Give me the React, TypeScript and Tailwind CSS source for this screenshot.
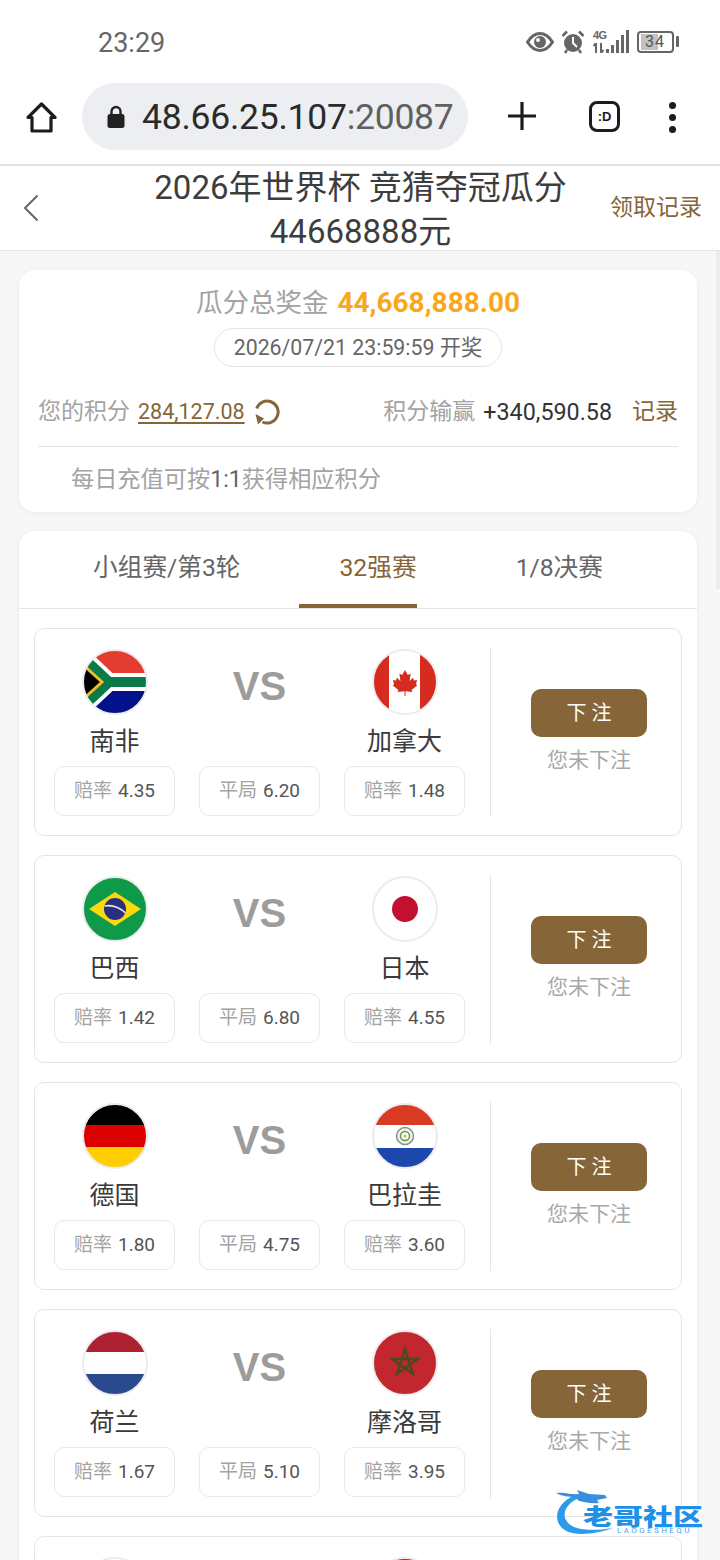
import React from 'react';

type FlagName = 'za' | 'ca' | 'br' | 'jp' | 'de' | 'py' | 'nl' | 'ma' | 'blank' | 'red';

interface Match {
  home: string;
  away: string;
  homeFlag: FlagName;
  awayFlag: FlagName;
  homeOdds: string;
  draw: string;
  awayOdds: string;
}

const matches: Match[] = [
  { home: '南非', away: '加拿大', homeFlag: 'za', awayFlag: 'ca', homeOdds: '4.35', draw: '6.20', awayOdds: '1.48' },
  { home: '巴西', away: '日本', homeFlag: 'br', awayFlag: 'jp', homeOdds: '1.42', draw: '6.80', awayOdds: '4.55' },
  { home: '德国', away: '巴拉圭', homeFlag: 'de', awayFlag: 'py', homeOdds: '1.80', draw: '4.75', awayOdds: '3.60' },
  { home: '荷兰', away: '摩洛哥', homeFlag: 'nl', awayFlag: 'ma', homeOdds: '1.67', draw: '5.10', awayOdds: '3.95' },
];

const FlagArt = ({ name }: { name: FlagName }) => {
  switch (name) {
    case 'za':
      return (
        <>
          <rect width="66" height="33" fill="#e23d30" />
          <rect y="33" width="66" height="33" fill="#03128a" />
          <path d="M-4 4 L27 33 L70 33 M27 33 L-4 62" fill="none" stroke="#fff" strokeWidth="18" />
          <path d="M-4 4 L27 33 L70 33 M27 33 L-4 62" fill="none" stroke="#0a7a48" strokeWidth="10" />
          <path d="M-2 13 L20 33 L-2 53 Z" fill="#000" stroke="#f2b92c" strokeWidth="3" />
        </>
      );
    case 'ca':
      return (
        <>
          <rect width="66" height="66" fill="#fff" />
          <rect width="17" height="66" fill="#d62c1f" />
          <rect x="48" width="18" height="66" fill="#d62c1f" />
          <path
            d="M33 21 L35.8 26 L38.6 24.6 L37.6 32 L41 28.8 L42 31.4 L45 31 L44 35.4 L45.4 36.2 L39.6 41 L40.2 43 L33.5 42.2 V47 H32.5 V42.2 L25.8 43 L26.4 41 L20.6 36.2 L22 35.4 L21 31 L24 31.4 L25 28.8 L28.4 32 L27.4 24.6 L30.2 26 Z"
            fill="#d62c1f"
          />
        </>
      );
    case 'br':
      return (
        <>
          <rect width="66" height="66" fill="#0e9a49" />
          <path d="M33 16 L59 33 L33 50 L7 33 Z" fill="#fbd90a" />
          <circle cx="33" cy="33" r="11" fill="#28307f" />
          <path d="M22.5 30 Q34 28 43.5 37" fill="none" stroke="#e8e8e8" strokeWidth="1.6" />
        </>
      );
    case 'jp':
      return (
        <>
          <rect width="66" height="66" fill="#fff" />
          <circle cx="33" cy="33" r="13" fill="#c3102f" />
        </>
      );
    case 'de':
      return (
        <>
          <rect width="66" height="23" fill="#000" />
          <rect y="22" width="66" height="22" fill="#dd0000" />
          <rect y="44" width="66" height="22" fill="#ffce00" />
        </>
      );
    case 'py':
      return (
        <>
          <rect width="66" height="22" fill="#d93a22" />
          <rect y="22" width="66" height="23" fill="#fff" />
          <rect y="45" width="66" height="21" fill="#1c48ad" />
          <circle cx="33" cy="33" r="8.5" fill="#eef1e8" stroke="#8a8f88" strokeWidth="1.5" />
          <circle cx="33" cy="33" r="4.5" fill="#fff" stroke="#5c9a5c" strokeWidth="1.5" />
          <circle cx="33" cy="33" r="1.5" fill="#d8b428" />
        </>
      );
    case 'nl':
      return (
        <>
          <rect width="66" height="23" fill="#ad2131" />
          <rect y="22" width="66" height="22" fill="#fff" />
          <rect y="44" width="66" height="22" fill="#2a4a8f" />
        </>
      );
    case 'ma':
      return (
        <>
          <rect width="66" height="66" fill="#c1272d" />
          <path d="M33 19 L41 44 L20 29 L46 29 L25 44 Z" fill="none" stroke="#4a4a22" strokeWidth="2.4" />
        </>
      );
    case 'red':
      return <rect width="66" height="66" fill="#c3102f" />;
    default:
      return <rect width="66" height="66" fill="#fff" />;
  }
};

const Flag = ({ name }: { name: FlagName }) => {
  const id = `clip-${name}`;
  return (
    <svg width="66" height="66" viewBox="0 0 66 66" className="block">
      <defs>
        <clipPath id={id}>
          <circle cx="33" cy="33" r="32" />
        </clipPath>
      </defs>
      <g clipPath={`url(#${id})`}>
        <FlagArt name={name} />
      </g>
      <circle cx="33" cy="33" r="32" fill="none" stroke="#ececec" strokeWidth="2" />
    </svg>
  );
};

const OddsBox = ({ label, value }: { label: string; value: string }) => (
  <div className="h-[50px] border border-[#e8e8e8] rounded-[10px] flex items-center justify-center gap-[6px] text-[19px]">
    <span className="text-[#a3a3a3]">{label}</span>
    <span className="text-[#555]">{value}</span>
  </div>
);

const MatchCard = ({ match }: { match: Match }) => (
  <div className="border border-[#e5e5e5] rounded-[10px] h-[208px] flex shrink-0 pt-[19px]">
    <div className="w-[456px] pl-[19px] pr-[25px] h-[169px] border-r border-[#e5e5e5]">
      <div className="grid grid-cols-[121px_121px_121px] gap-x-[24px] h-[118px] pt-[1px]">
        <div className="flex flex-col items-center">
          <Flag name={match.homeFlag} />
          <span className="text-[25px] leading-[34px] mt-[10px] text-[#3a3a3a]">{match.home}</span>
        </div>
        <div className="flex justify-center pt-[8px]">
          <span className="text-[40px] leading-[58px] font-bold text-[#9c9c9c] font-['Liberation_Sans',sans-serif]">VS</span>
        </div>
        <div className="flex flex-col items-center">
          <Flag name={match.awayFlag} />
          <span className="text-[25px] leading-[34px] mt-[10px] text-[#3a3a3a]">{match.away}</span>
        </div>
      </div>
      <div className="grid grid-cols-[121px_121px_121px] gap-x-[24px]">
        <OddsBox label="赔率" value={match.homeOdds} />
        <OddsBox label="平局" value={match.draw} />
        <OddsBox label="赔率" value={match.awayOdds} />
      </div>
    </div>
    <div className="pl-[40px] pt-[41px] w-[156px] flex flex-col items-center">
      <button className="w-[116px] h-[48px] rounded-[10px] bg-[#866538] text-white text-[20px] shrink-0">下 注</button>
      <span className="mt-[8px] text-[21px] leading-[30px] text-[#a8a8a8] whitespace-nowrap">您未下注</span>
    </div>
  </div>
);

// only the top of the next card is on screen
const PeekCard = () => (
  <div className="border border-[#e5e5e5] rounded-[10px] h-[208px] shrink-0 pt-[20px] pl-[19px]">
    <div className="grid grid-cols-[121px_121px_121px] gap-x-[24px]">
      <div className="flex justify-center">
        <Flag name="blank" />
      </div>
      <div></div>
      <div className="flex justify-center">
        <Flag name="red" />
      </div>
    </div>
  </div>
);

const StatusIcons = () => (
  <div className="flex items-center text-[#666]">
    <svg width="28" height="20" viewBox="0 0 28 20" className="mr-[7px]">
      <path d="M1.5 10 C6 3 10 1.5 14 1.5 C18 1.5 22 3 26.5 10 C22 17 18 18.5 14 18.5 C10 18.5 6 17 1.5 10 Z" fill="none" stroke="#666" strokeWidth="3" />
      <circle cx="14" cy="10" r="6" fill="#666" />
      <circle cx="12" cy="8" r="2" fill="#fff" />
    </svg>
    <svg width="24" height="24" viewBox="0 0 24 24" className="mr-[8px]">
      <circle cx="12" cy="13" r="9" fill="#666" />
      <path d="M12 7 V13 L16 17" fill="none" stroke="#fff" strokeWidth="2" />
      <path d="M1.5 6 L6 1.5 M22.5 6 L18 1.5 M6 20 L4 23 M18 20 L20 23" stroke="#666" strokeWidth="2.5" />
    </svg>
    <div className="flex flex-col w-[13px] items-start justify-between h-[23px]">
      <span className="text-[11px] leading-[11px] font-bold font-['Liberation_Sans',sans-serif] tracking-[-0.5px]">4G</span>
      <svg width="13" height="10" viewBox="0 0 13 10">
        <path d="M3 0 V10 M0.5 3 L3 0 M8 0 V10 M8 10 L10.5 7" stroke="#666" strokeWidth="2" fill="none" />
      </svg>
    </div>
    <svg width="23" height="23" viewBox="0 0 23 23" className="mr-[8px]">
      <rect x="0" y="19" width="3" height="4" fill="#666" />
      <rect x="5" y="15" width="3" height="8" fill="#666" />
      <rect x="10" y="10" width="3" height="13" fill="#666" />
      <rect x="15" y="5" width="3" height="18" fill="#666" />
      <rect x="20" y="0" width="3" height="23" fill="#666" />
    </svg>
    <div className="w-[37px] h-[22px] border-2 border-[#666] rounded-[4px] relative flex items-center">
      <div className="w-[17px] h-[16px] ml-[2px] bg-[#c2c2c2]"></div>
      <span className="absolute left-[6px] top-0 text-[16px] leading-[18px] text-[#555] tracking-[1px]">34</span>
    </div>
    <div className="w-[3px] h-[11px] ml-[2px] bg-[#666] rounded-[1px]"></div>
  </div>
);

export default function App() {
  const rows = matches.map((match, index) => <MatchCard key={index} match={match} />);

  return (
    <div className="w-[720px] h-[1560px] overflow-hidden relative bg-[#f7f7f7] font-['Roboto','Noto_Sans_CJK_SC',sans-serif]">
      {/* Status bar */}
      <div className="h-[83px] bg-white flex items-center justify-between pl-[98px] pr-[41px]">
        <span className="text-[27px] text-[#666] mt-[3px]">23:29</span>
        <StatusIcons />
      </div>

      {/* Browser toolbar */}
      <div className="h-[83px] bg-white border-b-2 border-[#e3e3e3] flex pl-[26px]">
        <svg width="31" height="31" viewBox="0 0 31 31" className="mt-[19px] mr-[25px]">
          <path d="M15.5 2 L29 15.5 H25 V29 H6 V15.5 H2 Z" fill="none" stroke="#1c1c1c" strokeWidth="3.2" strokeLinejoin="round" />
        </svg>
        <div className="w-[386px] h-[67px] rounded-full bg-[#eceef2] flex items-center pl-[25px] shrink-0">
          <svg width="18" height="24" viewBox="0 0 18 24" className="mr-[17px]">
            <path d="M4.5 10 V6.5 A4.5 4.5 0 0 1 13.5 6.5 V10" fill="none" stroke="#222" strokeWidth="2.4" />
            <rect x="0.5" y="9" width="17" height="14" rx="2.5" fill="#222" />
          </svg>
          <span className="text-[35.5px] leading-none text-[#2a2a2a] tracking-[-0.25px] whitespace-nowrap mt-[3px]">
            48.66.25.107<span className="text-[#606060]">:20087</span>
          </span>
        </div>
        <svg width="28" height="28" viewBox="0 0 28 28" className="mt-[19px] ml-[40px]">
          <path d="M14 0 V28 M0 14 H28" stroke="#1c1c1c" strokeWidth="3.2" />
        </svg>
        <div className="w-[31px] h-[31px] mt-[18px] ml-[53px] border-[3px] border-[#1c1c1c] rounded-[8px] flex items-center justify-center text-[13px] font-bold text-[#1c1c1c] font-['Liberation_Sans',sans-serif]">
          :D
        </div>
        <div className="flex flex-col gap-[5px] mt-[19px] ml-[49px]">
          <div className="w-[7px] h-[7px] rounded-full bg-[#1c1c1c]"></div>
          <div className="w-[7px] h-[7px] rounded-full bg-[#1c1c1c]"></div>
          <div className="w-[7px] h-[7px] rounded-full bg-[#1c1c1c]"></div>
        </div>
      </div>

      {/* Page header */}
      <div className="h-[85px] bg-white border-b border-[#e5e5e5] flex items-center">
        <div className="w-[150px] pl-[23px]">
          <svg width="16" height="28" viewBox="0 0 16 28">
            <path d="M14.5 1.5 L2 14 L14.5 26.5" fill="none" stroke="#666" strokeWidth="2" />
          </svg>
        </div>
        <div className="w-[421px] pt-[3px] text-center text-[33px] leading-[44px] text-[#3d3d3d] whitespace-nowrap">
          2026年世界杯 竞猜夺冠瓜分
          <br />
          44668888元
        </div>
        <span className="ml-[39px] text-[23px] text-[#866538] whitespace-nowrap">领取记录</span>
      </div>

      <div className="pl-[19px] pr-[23px] pt-[19px]">
        {/* Prize summary */}
        <div className="h-[242px] bg-white rounded-[16px] shadow-[0_1px_6px_rgba(0,0,0,0.05)] px-[19px] pt-[16px]">
          <div className="flex items-center justify-center h-[34px] gap-[9px]">
            <span className="text-[26.5px] text-[#a3a3a3]">瓜分总奖金</span>
            <span className="text-[28px] font-bold text-[#f9a81d]">44,668,888.00</span>
          </div>
          <div className="flex justify-center mt-[8px]">
            <div className="w-[288px] h-[39px] pt-[1px] border border-[#e5e5e5] rounded-full flex items-center justify-center text-[21.3px] text-[#666] whitespace-nowrap">
              2026/07/21 23:59:59 开奖
            </div>
          </div>
          <div className="flex items-center h-[40px] mt-[25px]">
            <span className="text-[23px] text-[#a3a3a3]">您的积分</span>
            <span className="ml-[8px] text-[21.5px] text-[#866538] underline underline-offset-[3px]">284,127.08</span>
            <svg width="27" height="27" viewBox="0 0 27 27" className="ml-[9px]">
              <path d="M2.7 9.5 A11 11 0 1 1 8.5 23" fill="none" stroke="#866538" strokeWidth="3" />
              <path d="M1.5 15 L10 19.5 L4 25.5 Z" fill="#866538" />
            </svg>
            <span className="ml-auto text-[23px] text-[#a3a3a3]">积分输赢</span>
            <span className="ml-[8px] text-[23.3px] text-[#333]">+340,590.58</span>
            <span className="ml-[20px] text-[23px] text-[#866538]">记录</span>
          </div>
          <div className="h-[15px] border-b border-[#e5e5e5]"></div>
          <div className="pl-[33px] mt-[16px] text-[23.2px] leading-[32px] text-[#a3a3a3]">
            每日充值可按<span className="text-[#666]">1:1</span>获得相应积分
          </div>
        </div>

        {/* Tabs and matches */}
        <div className="mt-[19px] bg-white rounded-[16px] shadow-[0_1px_6px_rgba(0,0,0,0.05)]">
          <div className="h-[78px] border-b border-[#e5e5e5] flex pl-[33px] gap-[58px] text-[24.7px]">
            <div className="pl-[41px] h-[77px] flex items-center text-[#666] pb-[4px] whitespace-nowrap">小组赛/第3轮</div>
            <div className="pl-[41px] h-[77px] flex items-center text-[#866538] border-b-4 border-[#866538] whitespace-nowrap">32强赛</div>
            <div className="pl-[41px] h-[77px] flex items-center text-[#666] pb-[4px] whitespace-nowrap">1/8决赛</div>
          </div>
          <div className="flex flex-col gap-[19px] px-[15px] pt-[19px]">
            {rows}
            <PeekCard />
          </div>
        </div>
      </div>

      {/* Scrollbar */}
      <div className="absolute right-0 top-[251px] w-[4px] h-[338px] bg-[#ececec]"></div>

      {/* Watermark */}
      <div className="absolute left-[555px] top-[1490px] w-[150px] h-[48px]">
        <svg width="62" height="48" viewBox="0 0 62 48" className="absolute left-0 top-0">
          <path d="M20 5 C4 12 0 24 3 32 C8 45 28 48 58 38 C34 42 14 40 10 28 C8 20 14 12 24 8 Z" fill="#2b9bec" />
          <path d="M1 3 C12 2 14 5 24 4 L22 0 L34 4 L50 5 L52 8 L42 10 L44 13 C36 14 30 12 24 11 L20 7 C14 7 6 6 1 3 Z" fill="#3a8fdc" />
        </svg>
        <span className="absolute left-[28px] top-[16px] text-[30px] leading-[22px] font-black text-[#1e90e8] whitespace-nowrap scale-y-[0.75]">老哥社区</span>
        <span className="absolute left-[62px] top-[38px] text-[8px] leading-[6px] text-[#4aa3e8] whitespace-nowrap tracking-[2.4px]">LAOGESHEQU</span>
      </div>
    </div>
  );
}
